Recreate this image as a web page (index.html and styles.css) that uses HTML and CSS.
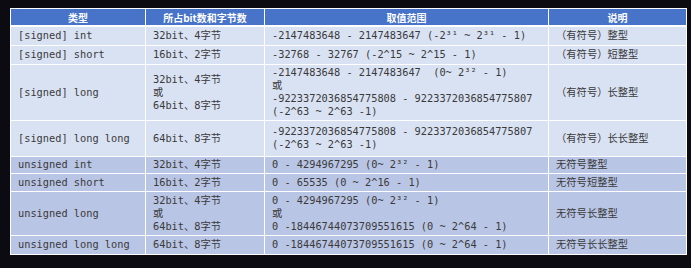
FILE: index.html
```html
<!DOCTYPE html>
<html lang="zh">
<head>
<meta charset="utf-8">
<link rel="stylesheet" href="styles.css">
</head>
<body>
<div class="wrap">
<table class="types">
  <colgroup>
    <col class="c1"><col class="c2"><col class="c3"><col class="c4">
  </colgroup>
  <thead>
    <tr class="hd"><th>类型</th><th>所占bit数和字节数</th><th>取值范围</th><th>说明</th></tr>
  </thead>
  <tbody>
    <tr class="s h19"><td>[signed] int</td><td>32bit、4字节</td><td>-2147483648 - 2147483647 (-2³¹ ~ 2³¹ - 1)</td><td>（有符号）整型</td></tr>
    <tr class="s h19"><td>[signed] short</td><td>16bit、2字节</td><td>-32768 - 32767 (-2^15 ~ 2^15 - 1)</td><td>（有符号）短整型</td></tr>
    <tr class="s h56"><td>[signed] long</td><td>32bit、4字节<br>或<br>64bit、8字节</td><td>-2147483648 - 2147483647  (0~ 2³² - 1)<br>或<br>-9223372036854775808 - 9223372036854775807<br>(-2^63 ~ 2^63 -1)</td><td>（有符号）长整型</td></tr>
    <tr class="s h36"><td>[signed] long long</td><td>64bit、8字节</td><td>-9223372036854775808 - 9223372036854775807<br>(-2^63 ~ 2^63 -1)</td><td>（有符号）长长整型</td></tr>
    <tr class="u h17"><td>unsigned int</td><td>32bit、4字节</td><td>0 - 4294967295 (0~ 2³² - 1)</td><td>无符号整型</td></tr>
    <tr class="u h18"><td>unsigned short</td><td>16bit、2字节</td><td>0 - 65535 (0 ~ 2^16 - 1)</td><td>无符号短整型</td></tr>
    <tr class="u h44"><td>unsigned long</td><td>32bit、4字节<br>或<br>64bit、8字节</td><td>0 - 4294967295 (0~ 2³² - 1)<br>或<br>0 -18446744073709551615 (0 ~ 2^64 - 1)</td><td>无符号长整型</td></tr>
    <tr class="u h19"><td>unsigned long long</td><td>64bit、8字节</td><td>0 -18446744073709551615 (0 ~ 2^64 - 1)</td><td>无符号长长整型</td></tr>
  </tbody>
</table>
</div>
</body>
</html>
```

FILE: styles.css
```css
html, body {
  margin: 0;
  padding: 0;
  background: #0b0b11;
}
.wrap {
  padding: 8px 0 0 10px;
}
.types {
  border-collapse: collapse;
  table-layout: fixed;
  width: 676px;
  border: 1px solid #e6e9f0;
  font-family: "DejaVu Sans Mono", "Noto Sans CJK SC", monospace;
  font-size: 10.3px;
  line-height: 13px;
  color: #3a3a3a;
}
.c1 { width: 135px; }
.c2 { width: 119px; }
.c3 { width: 284px; }
.c4 { width: 138px; }
.types th, .types td {
  border: 1px solid #ffffff;
  padding: 0 7px;
  vertical-align: middle;
  text-align: left;
  white-space: pre;
  overflow: hidden;
}
.hd th {
  background: #4773c8;
  color: #ffffff;
  font-family: "Noto Sans CJK SC", sans-serif;
  font-weight: bold;
  font-size: 10px;
  text-align: center;
  height: 16px;
  border-bottom: 2px solid #ffffff;
  padding: 0;
}
.s td { background: #d9e2f3; }
.u td { background: #b9c5e4; }
.h17 { height: 17px; }
.h18 { height: 18px; }
.h19 { height: 19px; }
.h36 { height: 36px; }
.h44 { height: 44px; }
.h56 { height: 56px; }
```
